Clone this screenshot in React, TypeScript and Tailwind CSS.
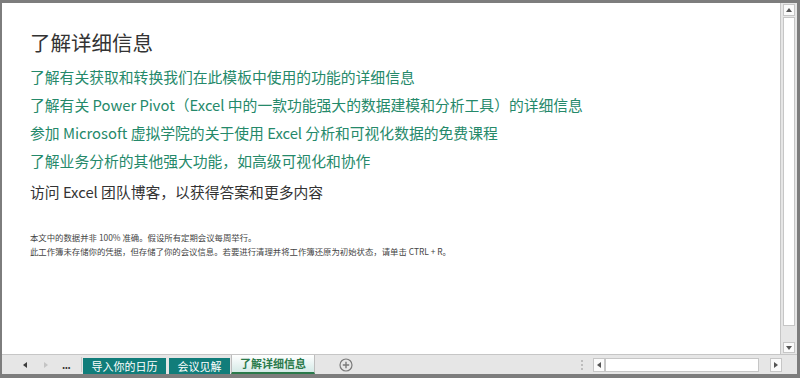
const font = "font-['Noto_Sans_CJK_SC',sans-serif]";

const links = [
  "了解有关获取和转换我们在此模板中使用的功能的详细信息",
  "了解有关 Power Pivot（Excel 中的一款功能强大的数据建模和分析工具）的详细信息",
  "参加 Microsoft 虚拟学院的关于使用 Excel 分析和可视化数据的免费课程",
  "了解业务分析的其他强大功能，如高级可视化和协作",
];

function Tri({ dir, color = "#444" }: { dir: "l" | "r" | "u" | "d"; color?: string }) {
  const pts = {
    l: "4,0 4,6 0,3",
    r: "0,0 0,6 4,3",
    u: "0,4 6,4 3,0",
    d: "0,0 6,0 3,4",
  }[dir];
  const w = dir === "l" || dir === "r" ? 4 : 6;
  const h = dir === "l" || dir === "r" ? 6 : 4;
  return (
    <svg width={w} height={h} viewBox={`0 0 ${w} ${h}`}>
      <polygon points={pts} fill={color} />
    </svg>
  );
}

function VScroll() {
  return (
    <div className="w-[17px] bg-[#e6e6e6] border-l border-[#c6c6c6] flex flex-col items-center pt-[1px] pb-[1px]">
      <div className="w-[12px] h-[12px] bg-[#fbfbfb] border border-[#c6c6c6] flex items-center justify-center">
        <Tri dir="u" color="#555" />
      </div>
      <div className="w-[12px] h-[309px] bg-white border border-[#c6c6c6] mt-[1px]" />
      <div className="flex-1" />
      <div className="w-[12px] h-[11px] bg-[#fbfbfb] border border-[#c6c6c6] flex items-center justify-center">
        <Tri dir="d" color="#555" />
      </div>
    </div>
  );
}

function TabBar() {
  return (
    <div className="h-[20px] bg-[#e6e6e6] border-t border-[#c6c6c6] flex items-stretch">
      <div className="w-[79px] flex items-center">
        <div className="ml-[21px]">
          <Tri dir="l" color="#3c3c3c" />
        </div>
        <div className="ml-[17px]">
          <Tri dir="r" color="#c4c4c4" />
        </div>
        <span className="ml-[14px] text-[10px] leading-none text-[#333] tracking-[-0.5px] font-bold">...</span>
      </div>
      <div className="w-px bg-[#c9c9c9] my-[2px]" />
      <div className="flex items-end gap-[3px] ml-px">
        <div className="h-[16px] w-[83px] bg-[#117d7a] text-white text-[11px] leading-[16px] text-center">
          导入你的日历
        </div>
        <div className="h-[16px] w-[61px] bg-[#117d7a] text-white text-[11px] leading-[16px] text-center">
          会议见解
        </div>
        <div className="h-[19px] w-[84px] -ml-[2px] bg-gradient-to-b from-white to-[#d5eae7] border-x border-[#bdbdbd] border-b-2 border-b-[#2a7a4b] text-[#2a7a4b] font-semibold text-[11px] leading-[16px] text-center">
          了解详细信息
        </div>
      </div>
      <div className="ml-[24px] flex items-center">
        <svg width="14" height="14" viewBox="0 0 14 14">
          <circle cx="7" cy="7" r="6" fill="none" stroke="#7a7a7a" strokeWidth="1.2" />
          <path d="M7 3.8v6.4M3.8 7h6.4" stroke="#7a7a7a" strokeWidth="1.4" />
        </svg>
      </div>
      <div className="flex-1" />
      <div className="flex flex-col justify-center gap-[2px] mr-[10px]">
        <div className="w-[2px] h-[2px] bg-[#bdbdbd]" />
        <div className="w-[2px] h-[2px] bg-[#bdbdbd]" />
        <div className="w-[2px] h-[2px] bg-[#bdbdbd]" />
      </div>
      <div className="flex items-center mr-[15px]">
        <div className="w-[12px] h-[14px] bg-[#fbfbfb] border border-[#c6c6c6] flex items-center justify-center">
          <Tri dir="l" color="#555" />
        </div>
        <div className="w-[154px] h-[14px] bg-white border border-[#c6c6c6]" />
        <div className="w-[11px] h-[14px]" />
        <div className="w-[12px] h-[14px] bg-[#fbfbfb] border border-[#c6c6c6] flex items-center justify-center">
          <Tri dir="r" color="#555" />
        </div>
      </div>
    </div>
  );
}

export default function App() {
  return (
    <div className={`w-[800px] h-[378px] bg-[#7d7d7d] pt-[3px] pl-[2px] pr-[3px] pb-[4px] flex flex-col ${font}`}>
      <div className="flex flex-1 min-h-0">
        <main className="flex-1 bg-white pl-[28px] pt-[25px]">
          <h1 className="text-[20.5px] leading-[28px] text-[#333]">了解详细信息</h1>
          <ul className="mt-[7px]">
            {links.map((t) => (
              <li key={t} className="text-[14.8px] leading-[28px] text-[#25896a]">
                {t}
              </li>
            ))}
          </ul>
          <p className="mt-[3px] text-[14.8px] leading-[28px] text-[#333]">
            访问 Excel 团队博客，以获得答案和更多内容
          </p>
          <div className="mt-[24px] text-[8.4px] leading-[14px] text-[#444]">
            <p>本文中的数据并非 100% 准确。假设所有定期会议每周举行。</p>
            <p>此工作簿未存储你的凭据，但存储了你的会议信息。若要进行清理并将工作簿还原为初始状态，请单击 CTRL + R。</p>
          </div>
        </main>
        <VScroll />
      </div>
      <TabBar />
    </div>
  );
}
